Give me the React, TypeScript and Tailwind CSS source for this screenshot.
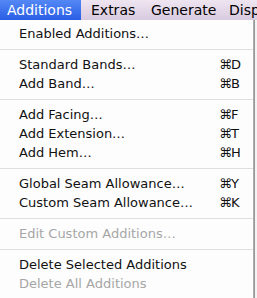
import React from "react";

type Item =
  | { kind: "sep" }
  | { kind: "item"; label: string; shortcut?: string; disabled?: boolean };

const items: Item[] = [
  { kind: "item", label: "Enabled Additions…" },
  { kind: "sep" },
  { kind: "item", label: "Standard Bands…", shortcut: "D" },
  { kind: "item", label: "Add Band…", shortcut: "B" },
  { kind: "sep" },
  { kind: "item", label: "Add Facing…", shortcut: "F" },
  { kind: "item", label: "Add Extension…", shortcut: "T" },
  { kind: "item", label: "Add Hem…", shortcut: "H" },
  { kind: "sep" },
  { kind: "item", label: "Global Seam Allowance…", shortcut: "Y" },
  { kind: "item", label: "Custom Seam Allowance…", shortcut: "K" },
  { kind: "sep" },
  { kind: "item", label: "Edit Custom Additions…", disabled: true },
  { kind: "sep" },
  { kind: "item", label: "Delete Selected Additions" },
  { kind: "item", label: "Delete All Additions", disabled: true },
];

export default function App() {
  return (
    <div className="w-[257px] h-[298px] overflow-hidden bg-white font-['DejaVu_Sans',sans-serif]">
      {/* menu bar */}
      <div className="flex h-[20px] bg-gradient-to-b from-[#efe5f1] to-[#d8cadf] text-[14px] leading-[20px] text-black">
        <div className="w-[81px] shrink-0 pl-[7px] bg-gradient-to-b from-[#5488f5] to-[#2a5de6] text-white">
          Additions
        </div>
        <div className="w-[60px] shrink-0 pl-[10px]">Extras</div>
        <div className="w-[78px] shrink-0 pl-[10px]">Generate</div>
        <div className="shrink-0 pl-[10px] whitespace-nowrap">Disp</div>
      </div>

      <div className="flex h-[278px]">
        {/* dropdown */}
        <div className="w-[253px] shrink-0 bg-[#fdfdfd] pt-[4px] text-[13px]">
          {items.map((it, i) =>
            it.kind === "sep" ? (
              <div key={i} className="h-[12px] flex items-center">
                <div className="h-px w-full bg-[#dedede]" />
              </div>
            ) : (
              <div
                key={i}
                className={
                  "h-[19px] flex items-center pl-[19px] whitespace-nowrap " +
                  (it.disabled ? "text-[#a6a6a6]" : "text-[#111]")
                }
              >
                <span className="flex-1">{it.label}</span>
                {it.shortcut && (
                  <span className="w-[34px] shrink-0 flex">
                    <span className="w-[12px] text-[13px]">⌘</span>
                    <span>{it.shortcut}</span>
                  </span>
                )}
              </div>
            )
          )}
        </div>
        <div className="w-[2px] shrink-0 bg-gradient-to-r from-[#b8b8b8] to-[#8e8e8e]" />
        <div className="flex-1 bg-[#f4f4f4]" />
      </div>
    </div>
  );
}
